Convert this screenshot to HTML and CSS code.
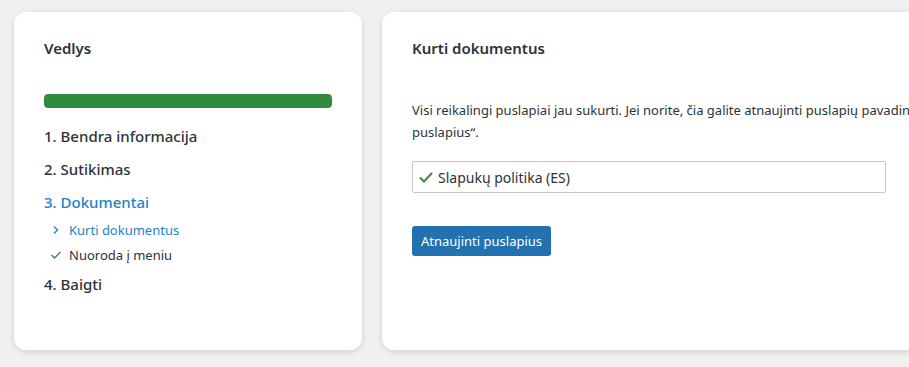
FILE: index.html
```html
<html>
    <head>
        <title>Vedlys</title>
        <link rel="stylesheet" href="styles.css">
    </head>
    <body>
        <div class="wizard">
            <div class="card menu">
                <h2 class="title">Vedlys</h2>
                <div class="progress"><div class="bar" style="width:100%"></div></div>
                <ul class="steps">
                    <li class="step">1. Bendra informacija</li>
                    <li class="step">2. Sutikimas</li>
                    <li class="step active">3. Dokumentai</li>
                    <li class="sub current">
                        <svg width="10" height="10" viewBox="0 0 10 10"><path d="M3 1.5 L6.5 5 L3 8.5" fill="none" stroke="#2383c5" stroke-width="1.4"/></svg>
                        Kurti dokumentus
                    </li>
                    <li class="sub done">
                        <svg width="12" height="10" viewBox="0 0 12 10"><path d="M1.5 5 L4.5 8 L10.5 2" fill="none" stroke="#3b8b41" stroke-width="1.4"/></svg>
                        Nuoroda į meniu
                    </li>
                    <li class="step">4. Baigti</li>
                </ul>
            </div>
            <div class="card content">
                <h2 class="title">Kurti dokumentus</h2>
                <p class="text">Visi reikalingi puslapiai jau sukurti. Jei norite, čia galite atnaujinti puslapių pavadinimus paspaudę „Atnaujinti puslapius“.</p>
                <div class="page-item">
                    <svg width="16" height="14" viewBox="0 0 16 14"><path d="M2 7.5 L6 11.5 L14 3" fill="none" stroke="#3b8b41" stroke-width="2"/></svg>
                    <span>Slapukų politika (ES)</span>
                </div>
                <button class="update">Atnaujinti puslapius</button>
            </div>
        </div>
    </body>
</html>
```

FILE: styles.css
```css
body{
    margin:0;
    background-color:#f0f0f0;
    font-family:"Noto Sans", "Open Sans", sans-serif;
    color:#2c3338;
    overflow:hidden;
}
.wizard{
    display:flex;
    gap:20px;
    padding:12px 0 0 14px;
    align-items:flex-start;
}
.card{
    background-color:white;
    border-radius:12px;
    box-shadow:0 2px 6px rgba(0,0,0,0.12);
    height:338px;
    box-sizing:border-box;
    padding:26px 30px;
    flex:none;
}
.menu{
    width:348px;
}
.content{
    width:750px;
}
.title{
    margin:0;
    font-size:15px;
    font-weight:600;
    line-height:20px;
    color:#2c3338;
}
.progress{
    margin-top:36px;
    height:14px;
    background-color:#e5e5e5;
    border-radius:4px;
    overflow:hidden;
}
.bar{
    height:100%;
    background-color:#2f8a39;
    border-radius:4px;
}
.steps{
    list-style:none;
    margin:18px 0 0 0;
    padding:0;
}
.step{
    font-size:15px;
    font-weight:500;
    line-height:20px;
    margin-bottom:13px;
}
.step.active{
    color:#2383c5;
    margin-bottom:9px;
}
.sub{
    font-size:13px;
    line-height:18px;
    margin:0 0 7px 6px;
    display:flex;
    align-items:center;
    gap:7px;
}
.sub svg{
    width:12px;
}
.sub.current{
    color:#2383c5;
}
.sub.done{
    margin-bottom:10px;
}
.text{
    margin:41px 0 18px 0;
    font-size:13px;
    line-height:22px;
}
.page-item{
    width:474px;
    height:32px;
    box-sizing:border-box;
    border:1px solid #c8c8c8;
    border-radius:2px;
    display:flex;
    align-items:center;
    gap:4px;
    padding-left:5px;
    font-size:14px;
}
.update{
    margin-top:33px;
    background-color:#2271b1;
    color:white;
    border:none;
    border-radius:3px;
    font-family:inherit;
    font-size:13px;
    padding:0 9px;
    height:30px;
    cursor:pointer;
}
```
